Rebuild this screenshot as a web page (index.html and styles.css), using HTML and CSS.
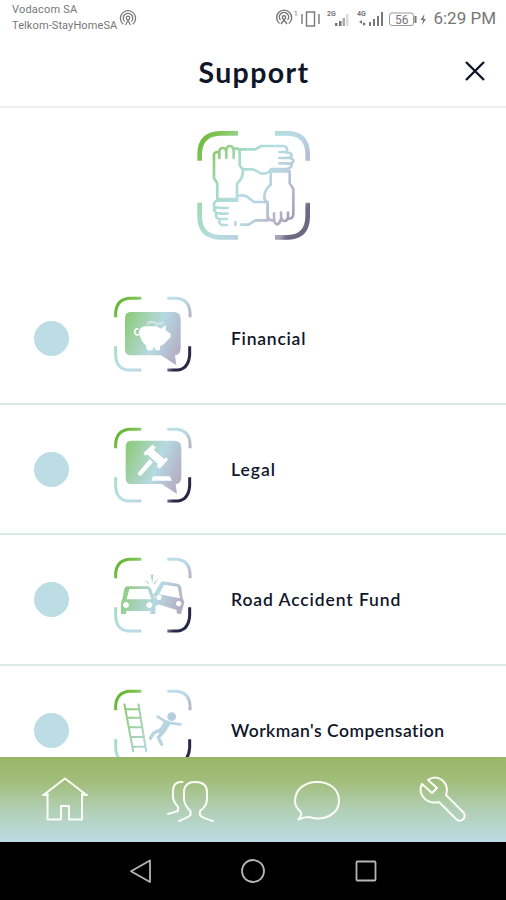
FILE: index.html
```html
<!DOCTYPE html>
<html lang="en">
<head>
<meta charset="utf-8">
<title>Support</title>
<link rel="stylesheet" href="styles.css">
</head>
<body>
<div class="screen">
  <div class="status">
    <div class="carriers"><span class="carrier-a">Vodacom SA</span><span class="carrier-b">Telkom-StayHomeSA</span></div>
    <svg class="cast" viewBox="0 0 18 18"><g fill="none" stroke="#777" stroke-width="1.2"><path d="M4.3 15.2A7.6 7.6 0 1 1 13.7 15.2M5.7 12.6A4.8 4.8 0 1 1 12.3 12.6"/><circle cx="9" cy="9" r="1.8"/><path d="M6.5 16L9 11.5L11.5 16"/></g></svg>
    <svg class="signals" viewBox="0 0 155 22">
      <g fill="none" stroke="#777" stroke-width="1.4"><path d="M4.5 15.5A7.5 7.5 0 1 1 13.8 15.5M5.5 12A4.6 4.6 0 1 1 12.5 12"/><circle cx="9" cy="9.5" r="1.7"/><path d="M6 16L9 12L12 16M27 6v10M44 6v10"/><rect x="31.500" y="4" width="8" height="14"/><rect x="114.500" y="5" width="24" height="12.500" rx="2.500" stroke="#999" stroke-width="1"/></g>
      <g fill="#777"><path d="M60 15h2.500v3H60zM64 13h2.500v5H64zM94 14h2v4h-2zM98 11h2v7h-2zM102 8h2v10h-2zM106 4h2v14h-2z"/><path d="M67.500 10H70v8h-2.500z" fill="#aaa"/><path d="M71 6h2.500v12H71z" fill="#ddd"/><path d="M139.500 8h2v7h-2zM149.500 6l-4 6h2.500l-1 5l4-6h-2.500z"/><path d="M84 14l3-2v4zM91 16l-3-2v4z"/>
      <text x="18.500" y="8" font-size="8">1</text><text x="52" y="8" font-size="7" font-weight="700">2G</text><text x="82" y="8" font-size="7" font-weight="700">4G</text><text x="120" y="15.500" font-size="12">56</text></g>
    </svg>
    <span class="time">6:29 PM</span>
  </div>

  <header class="header">
    <h1>Support</h1>
    <svg class="close" viewBox="0 0 22 22"><path d="M2 2L20 20M20 2L2 20" stroke="#101629" stroke-width="2.400"/></svg>
  </header>

  <main class="content">
    <div class="hero">
      <svg width="135" height="130" viewBox="0 0 405 390">
        <defs><linearGradient id="heroTone" gradientUnits="userSpaceOnUse" x1="45" y1="45" x2="365" y2="265">
          <stop offset="0" stop-color="#6bb935"/><stop offset=".17" stop-color="#8aca6c"/><stop offset=".33" stop-color="#a3dabd"/><stop offset=".52" stop-color="#b5dde3"/><stop offset=".68" stop-color="#b9d3e0"/><stop offset=".82" stop-color="#b9b7cc"/><stop offset=".96" stop-color="#a29eb4"/><stop offset="1.0" stop-color="#6d6983"/></linearGradient></defs>
        <g fill="none" stroke="url(#heroTone)">
          <path stroke-width="14" d="M44 122V100Q46 42 105 40H159M270 40H310Q366 42 368 100V122M44 248V292Q46 350 105 352H159M270 352H310Q366 350 368 292V248"/>
          <g stroke-width="8" stroke-linejoin="round" stroke-linecap="round">
            <path d="M97 235V190L87 174V104Q88 94 103 97V114M103 98Q103 84 113 84Q124 84 124 98V114M124 91Q125 77 136 78Q146 80 146 94V114M146 88Q162 80 164 96V135L174 150Q175 174 156 191V235M97 237H157"/>
            <path d="M164 88H211L228 78H297Q309 80 305 96H283M303 97Q320 98 320 106Q320 114 305 114H283M316 114Q328 119 324 126Q320 133 305 130H283M320 133Q321 145 303 147H258Q249 164 228 160L205 148H174"/>
            <path d="M257 154H314V190L325 207V283Q323 297 309 296V278M309 291Q307 304 297 303Q287 302 288 278M288 296Q284 313 275 313Q266 311 267 280M267 302Q248 302 248 285V251L238 236Q237 209 257 194V154"/>
            <path d="M157 228Q181 222 193 235L207 246H248V301H211L191 314H169M126 315H111Q98 309 106 297H126M106 298Q90 295 94 282Q96 278 110 281H128M94 279Q84 270 89 264Q94 261 110 264H128M88 262Q84 244 98 242H157M151 306v9"/>
          </g>
        </g>
      </svg>
    </div>

    <section class="row">
      <span class="dot"></span>
      <svg class="icon" viewBox="0 0 330 300">
        <defs>
          <linearGradient id="frameTone" gradientUnits="userSpaceOnUse" x1="45" y1="43" x2="265" y2="193"><stop offset="0" stop-color="#5bb127"/><stop offset=".2" stop-color="#7dc451"/><stop offset=".31" stop-color="#a6dcc6"/><stop offset=".5" stop-color="#bcdfe8"/><stop offset=".68" stop-color="#b9d9e4"/><stop offset=".8" stop-color="#bab7c9"/><stop offset=".92" stop-color="#918ca5"/><stop offset="1" stop-color="#2b2748"/></linearGradient>
          <linearGradient id="fillTone" gradientUnits="userSpaceOnUse" x1="75" y1="95" x2="245" y2="165"><stop offset="0" stop-color="#8acb76"/><stop offset=".3" stop-color="#a3d2ae"/><stop offset=".6" stop-color="#b5d9e2"/><stop offset="1" stop-color="#b5b1c5"/></linearGradient>
          <g id="frame" fill="none" stroke="url(#frameTone)" stroke-width="9"><path d="M47 100V86Q50 46 88 43H124M202 43H232Q268 48 270 86V100M47 187V212Q48 254 84 258H124M202 258H234Q266 254 269 212V187"/></g>
          <path id="bubble" d="M94 77H222Q244 77 244 99V185Q244 207 227 207L231 237L185 207H94Q77 207 77 188V96Q77 77 94 77Z" fill="url(#fillTone)"/>
        </defs>
        <use href="#frame"/><g transform="translate(-2 7)"><use href="#bubble"/></g>
        <path d="M120 150Q106 158 104 144Q104 133 115 135" fill="none" stroke="#fff" stroke-width="5"/>
        <path fill="#fff" d="M117 143Q120 128 136 127H170L182 134L198 123L197 139L212 149V160L203 168Q194 181 181 186L179 199H166L162 187L157 199H141L138 184Q121 171 117 143Z"/>
        <path d="M145 122Q143 113 153 114Q162 111 169 120L190 117" fill="none" stroke="#d3e9e5" stroke-width="6"/>
      </svg>
      <span class="label financial">Financial</span>
    </section>

    <section class="row">
      <span class="dot"></span>
      <svg class="icon" viewBox="0 0 330 300"><use href="#frame"/><use href="#bubble"/>
        <g fill="#fff"><path d="M157 89L167 97L162 105L192 132L199 127L204 134L179 161L170 153L174 147L141 118L136 122L130 115Z"/><path d="M149 132L159 142L122 183Q115 184 113 175Z"/><path d="M159 184H209L216 197H154Z"/></g></svg>
      <span class="label legal">Legal</span>
    </section>

    <section class="row">
      <span class="dot"></span>
      <svg class="icon" viewBox="0 0 330 300"><use href="#frame"/>
        <g fill="url(#fillTone)" fill-rule="evenodd">
          <path d="M82 124H143Q150 124 153 132L163 159L166 174V207H151V198H79V207H63V174L68 158L72 136Q75 124 82 124ZM88 132L80 163H154L144 132ZM78 171a9 9 0 1 0 .1 0ZM148 171a9 9 0 1 0 .1 0Z"/>
          <path d="M190 109L232 116Q242 118 244 129L247 156L253 172L243 208L230 205V195L174 178L171 184L160 175L165 156L159 149L167 139L180 116Q184 108 190 109ZM192 119L177 148L240 160L233 125ZM177 149a8 8 0 1 0 .1 0ZM236 168a8 8 0 1 0 .1 0Z"/>
          <path d="M134 103L146 113L145 118ZM152 90L160 88L157 115ZM177 98L163 119L161 115Z"/>
        </g></svg>
      <span class="label road">Road Accident Fund</span>
    </section>

    <section class="row">
      <span class="dot"></span>
      <svg class="icon last" viewBox="0 0 330 300"><use href="#frame"/>
        <g fill="none" stroke="url(#fillTone)" stroke-width="6"><path d="M73 80L100 225M115 80L139 225M77 97H118M81 122H122M86 151H127M91 180H132M96 209H137"/></g>
        <g fill="none" stroke="#b7d5e1" stroke-linecap="round" stroke-linejoin="round"><path d="M173 119L201 137L241 142" stroke-width="8"/><path d="M200 140L186 163" stroke-width="20"/><path d="M178 160L160 169L151 184M188 166L175 181L185 202" stroke-width="10"/></g><circle cx="215" cy="119" r="13" fill="#b6cdde"/></svg>
      <span class="label work">Workman's Compensation</span>
    </section>
  </main>

  <nav class="tabs">
    <svg viewBox="0 0 48 48"><path d="M2.500 19L24 2.500L45.500 19M6.500 18V43.500H20V30H28V43.500H41V18M2 19H7M41 19H46"/></svg>
    <svg viewBox="0 0 48 48"><path d="M15.500 6Q6 5 6 16V22Q7 27 11 31V35L1 38M12 45Q22 41 23.500 39V35Q17 29 17 23V15Q18 6 28 6Q40 6 40 16V23Q40 30 33 35V39Q35 42 46 45"/></svg>
    <svg viewBox="0 0 48 48"><path d="M5.500 43.500Q10 39 7 35Q2 31 2 25C2 14 11 6 24 6C38 6 46 14 46 25C46 38 31 46 16 41Q11 41 5.500 43.500Z"/></svg>
    <svg viewBox="0 0 48 48"><path d="M9 4Q16 -1 23 4Q30 10 27 19L45 37Q47 42 43 44Q40 46 37 43L20 26Q12 28 6 23Q-1 16 3 8L13 17L18 12Z"/></svg>
  </nav>

  <div class="system">
    <svg viewBox="0 0 24 26"><path d="M21 2.500V24L2 13.250Z"/></svg>
    <svg viewBox="0 0 24 26"><circle cx="12" cy="13" r="11"/></svg>
    <svg viewBox="0 0 24 26"><rect x="2.500" y="3.500" width="19" height="19" rx="1"/></svg>
  </div>
</div>
</body>
</html>
```
FILE: styles.css
```css
* { box-sizing: border-box; }
body { margin: 0; background: #fff; }
.screen { width: 506px; height: 900px; display: flex; flex-direction: column; overflow: hidden; font-family: Lato, sans-serif; color: #101629; }
.screen svg { display: block; flex: none; }
.status { height: 38px; flex: none; display: flex; align-items: flex-start; padding: 2px 10px 0 12px; font-family: Roboto, sans-serif; color: #777; }
.carriers { width: 107px; display: flex; flex-direction: column; font-size: 11px; line-height: 16px; white-space: nowrap; }
.carrier-a { letter-spacing: .2px; }
.carrier-b { letter-spacing: .1px; }
.cast { width: 18px; height: 18px; margin: 7px 0 0 1px; }
.signals { width: 155px; height: 22px; margin: 6px 0 0 138px; }
.time { margin: 4px 0 0 3px; font-size: 17px; line-height: 24px; white-space: nowrap; }
.header { height: 70px; flex: none; border-bottom: 2px solid #eeeff0; display: grid; grid-template-columns: 1fr auto 1fr; align-items: center; padding-right: 20px; }
h1 { grid-column: 2; margin: 0 0 0 22px; font-size: 28.5px; line-height: 36px; font-weight: 700; letter-spacing: 1.4px; }
.close { width: 22px; height: 22px; justify-self: end; margin-top: -3px; }
.content { flex: 1; min-height: 0; overflow: hidden; }
.hero { height: 166px; padding: 12px 0 0 185px; }
.row { height: 130.7px; display: flex; align-items: center; border-bottom: 2px solid #d9e8e8; }
.dot { width: 35px; height: 35px; margin-left: 34px; border-radius: 50%; background: #bddde5; flex: none; }
.icon { width: 110px; height: 100px; margin: -9px 0 0 31px; }
.last { margin-top: -6px; }
.label { margin-left: 21px; font-size: 17.5px; font-weight: 600; white-space: nowrap; }
.financial { letter-spacing: .75px; }
.legal { letter-spacing: 1px; }
.road { letter-spacing: .9px; }
.work { letter-spacing: .48px; }
.tabs { height: 85px; flex: none; padding-left: 2px; display: flex; justify-content: space-around; align-items: center; background: linear-gradient(#98b666, #a3be7d 30%, #b1cfb5 62%, #bddbe3); }
.tabs svg { width: 48px; height: 48px; fill: none; stroke: #fafff7; stroke-width: 2; stroke-linejoin: round; stroke-linecap: round; }
.system { height: 58px; flex: none; background: #000; display: flex; justify-content: center; align-items: center; gap: 88.5px; }
.system svg { width: 24px; height: 26px; fill: none; stroke: #b5b5b5; stroke-width: 1.8; stroke-linejoin: round; }
```
